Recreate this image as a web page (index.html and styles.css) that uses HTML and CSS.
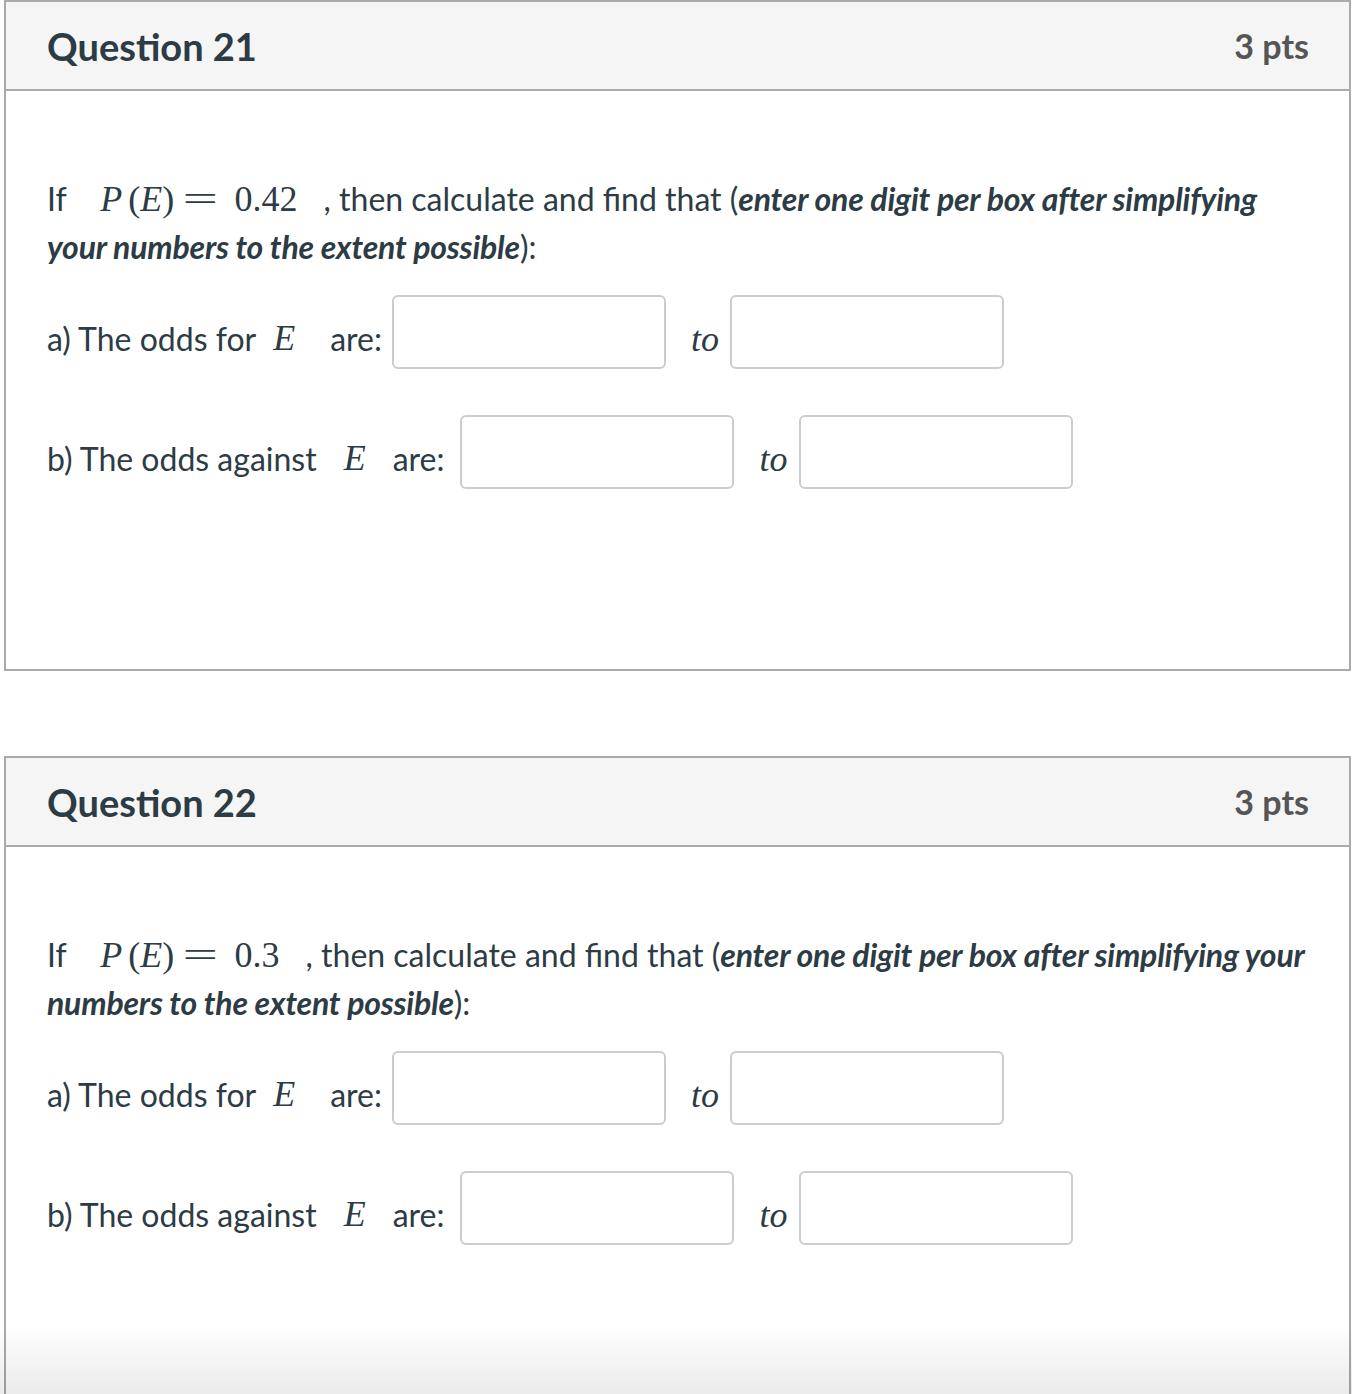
FILE: index.html
```html
<!DOCTYPE html>
<html lang="en">
<head>
<meta charset="utf-8">
<title>Quiz</title>
<link rel="stylesheet" href="styles.css">
</head>
<body>
<div class="page">
  <section class="question">
    <header class="q-header">
      <h2 class="q-name">Question 21</h2>
      <span class="q-points">3 pts</span>
    </header>
    <div class="q-body">
      <p class="q-text">If <span class="math"><i>P</i><span class="sp"></span>(<i>E</i>)<span class="rel">=</span>0.42</span>, then calculate and find that (<b><i>enter one digit per box after simplifying your numbers to the extent possible</i></b>):</p>
      <div class="row row-a">
        <span class="lbl">a) The odds for</span>
        <span class="mvar">E</span>
        <span class="lbl">are:</span>
        <span class="box"></span>
        <span class="to">to</span>
        <span class="box"></span>
      </div>
      <div class="row row-b">
        <span class="lbl">b) The odds against</span>
        <span class="mvar">E</span>
        <span class="lbl">are:</span>
        <span class="box"></span>
        <span class="to">to</span>
        <span class="box"></span>
      </div>
    </div>
  </section>

  <section class="question">
    <header class="q-header">
      <h2 class="q-name">Question 22</h2>
      <span class="q-points">3 pts</span>
    </header>
    <div class="q-body">
      <p class="q-text">If <span class="math"><i>P</i><span class="sp"></span>(<i>E</i>)<span class="rel">=</span>0.3</span>, then calculate and find that (<b><i>enter one digit per box after simplifying your numbers to the extent possible</i></b>):</p>
      <div class="row row-a">
        <span class="lbl">a) The odds for</span>
        <span class="mvar">E</span>
        <span class="lbl">are:</span>
        <span class="box"></span>
        <span class="to">to</span>
        <span class="box"></span>
      </div>
      <div class="row row-b">
        <span class="lbl">b) The odds against</span>
        <span class="mvar">E</span>
        <span class="lbl">are:</span>
        <span class="box"></span>
        <span class="to">to</span>
        <span class="box"></span>
      </div>
    </div>
  </section>
</div>
<div class="fade"></div>
</body>
</html>
```

FILE: styles.css
```css
html, body {
  margin: 0;
  padding: 0;
  height: 1394px;
  overflow: hidden;
  background: #fff;
}

body {
  font-family: Lato, "Open Sans", sans-serif;
  color: #2d3b45;
}

.page {
  padding: 0 1px 0 4px;
}

.question {
  border: 2px solid #aaa;
  margin-bottom: 85px;
}

.q-header {
  display: flex;
  justify-content: space-between;
  align-items: center;
  height: 87px;
  padding: 0 40px 0 41px;
  background: #f5f5f5;
  border-bottom: 2px solid #aaa;
}

.q-name {
  margin: 0;
  font-size: 38px;
  font-weight: 700;
  color: #2d3b45;
}

.q-points {
  font-size: 34px;
  font-weight: 700;
  color: #555;
}

.q-body {
  padding: 84px 36px 180px 41px;
}

.q-text {
  margin: 0;
  font-size: 32px;
  line-height: 48px;
}

.q-text b i {
  font-weight: 700;
  font-style: italic;
  letter-spacing: -0.2px;
}

.math {
  font-family: "Liberation Serif", "Times New Roman", serif;
  font-size: 36px;
  margin: 0 26px 0 26px;
}

.math i {
  font-style: italic;
}

.math .sp {
  display: inline-block;
  width: 6px;
}

.math .rel {
  display: inline-block;
  margin: 0 23px 0 15px;
  transform: scaleX(1.75);
  padding: 0 1px;
}

.row {
  display: flex;
  align-items: center;
  height: 74px;
  font-size: 32px;
}

.row-a {
  margin-top: 24px;
}

.row-b {
  margin-top: 46px;
}

.lbl {
  padding-top: 12px;
}

.mvar {
  font-family: "Liberation Serif", "Times New Roman", serif;
  font-style: italic;
  font-size: 36px;
  padding-top: 12px;
  margin: 0 35px 0 17px;
}

.row-b .mvar {
  margin: 0 27px 0 27px;
}

.box {
  width: 270px;
  height: 70px;
  border: 2px solid #ccc;
  border-radius: 6px;
  margin-left: 10px;
  background: #fff;
}

.row-b .lbl + .box {
  margin-left: 16px;
}

.to {
  font-family: "Liberation Serif", "Times New Roman", serif;
  font-style: italic;
  font-size: 36px;
  padding-top: 14px;
  margin: 0 1px 0 25px;
}

.fade {
  position: fixed;
  left: 0;
  right: 0;
  bottom: 0;
  height: 70px;
  background: linear-gradient(to bottom, rgba(0, 0, 0, 0), rgba(0, 0, 0, 0.08));
  pointer-events: none;
}
```
